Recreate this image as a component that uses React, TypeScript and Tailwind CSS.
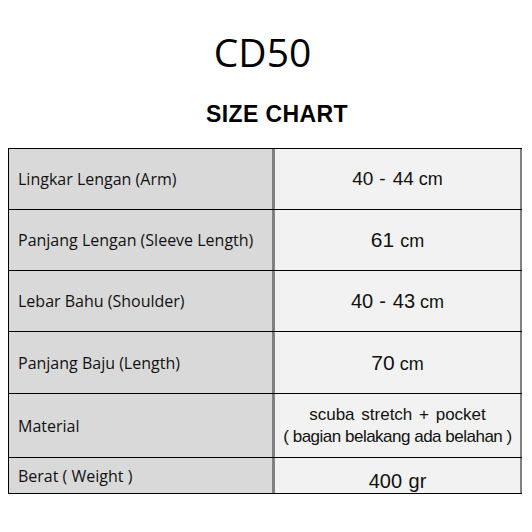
import React from 'react';

const rows = [
  {
    label: 'Lingkar Lengan (Arm)',
    h: 'h-[61px]',
    value: (
      <span className="text-[19px]">
        40<span className="ml-[6px]">-</span>
        <span className="ml-[7px]">44</span>
        <span className="ml-[5px] text-[18px]">cm</span>
      </span>
    ),
  },
  {
    label: 'Panjang Lengan (Sleeve Length)',
    h: 'h-[61px]',
    value: (
      <span className="text-[21px]">
        61<span className="ml-[6px] text-[18px]">cm</span>
      </span>
    ),
  },
  {
    label: 'Lebar Bahu (Shoulder)',
    h: 'h-[61px]',
    value: (
      <span className="text-[20px]">
        40<span className="ml-[6px]">-</span>
        <span className="ml-[7px]">43</span>
        <span className="ml-[5px] text-[18px]">cm</span>
      </span>
    ),
  },
  {
    label: 'Panjang Baju (Length)',
    h: 'h-[62px]',
    value: (
      <span className="text-[21px]">
        70<span className="ml-[5px] text-[18px]">cm</span>
      </span>
    ),
  },
  {
    label: 'Material',
    h: 'h-[64px]',
    value: (
      <div className="text-[17px] leading-[22px]">
        <div className="[word-spacing:2px]">scuba stretch + pocket</div>
        <div className="tracking-[-0.5px]">( bagian belakang ada belahan )</div>
      </div>
    ),
  },
  {
    label: 'Berat ( Weight )',
    h: 'h-[36px]',
    value: <span className="text-[20px] relative top-[5px] [word-spacing:1px]">400 gr</span>,
  },
];

export default function App() {
  return (
    <div className="w-[532px] h-[532px] bg-white text-black overflow-hidden">
      <div className="pt-[32px] pr-[7px] text-center text-[39px] leading-none font-['Open_Sans',sans-serif]">CD50</div>
      <div className="mt-[32px] pl-[22px] text-center text-[23px] leading-none font-bold tracking-[0.4px] font-['Liberation_Sans',Arial,sans-serif]">
        SIZE CHART
      </div>
      <div className="mt-[22px] ml-[8px] w-[514px] border-l border-black border-b border-b-black">
        {rows.map((r) => (
          <div key={r.label} className={`flex border-t border-black ${r.h}`}>
            <div className="w-[263px] bg-[#d9d9d9] flex items-center pl-[9px] text-[16px] font-['Open_Sans',sans-serif] text-[#111]">
              {r.label}
            </div>
            <div className="flex-1 overflow-hidden bg-[#f2f2f2] border-l-[3px] border-l-[#808080] border-r-[2px] border-r-[#808080] flex items-center justify-center text-center font-['Liberation_Sans',Arial,sans-serif] text-[#111]">
              <div>{r.value}</div>
            </div>
          </div>
        ))}
      </div>
    </div>
  );
}
